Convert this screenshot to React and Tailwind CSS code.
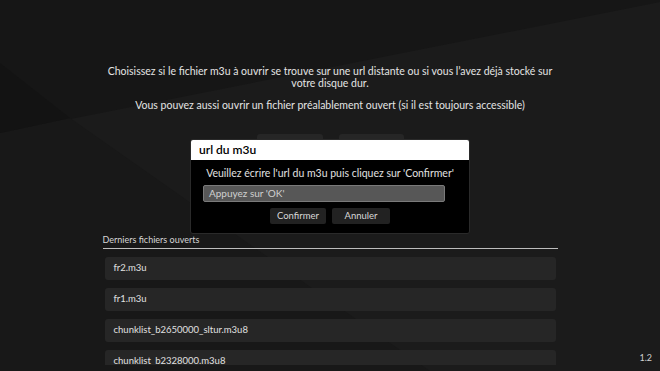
const files = [
    'fr2.m3u',
    'fr1.m3u',
    'chunklist_b2650000_sltur.m3u8',
    'chunklist_b2328000.m3u8',
];

const Backdrop = () => (
    <svg className="absolute inset-0 h-full w-full" viewBox="0 0 660 371" preserveAspectRatio="none">
        <rect width="660" height="371" fill="#1b1b1b" />
        <polygon points="0,0 660,0 660,2 0,133" fill="#161616" />
        <polygon points="70,118 430,371 0,371 0,133" fill="#181818" />
        <polygon points="0,63 70,118 0,133" fill="#131313" />
    </svg>
);

const UrlDialog = () => (
    <div className="absolute left-[190px] top-[139px] w-[280px] overflow-hidden rounded-[3px] border border-[#2a2a2a]">
        <div className="flex h-[20px] items-center bg-white pl-[8px] text-[12px] font-semibold text-black">
            url du m3u
        </div>
        <div className="flex flex-col bg-black px-[12px] pb-[9px] pt-[7px]">
            <p className="text-center text-[10.5px] leading-[12px] text-[#e0e0e0]">
                Veuillez écrire l'url du m3u puis cliquez sur 'Confirmer'
            </p>
            <div className="mt-[6px] flex h-[17px] w-[242px] items-center rounded-[2px] border border-[#7a7a7a] bg-[#575757] pl-[5px] text-[10px] text-[#d0d0d0]">
                Appuyez sur 'OK'
            </div>
            <div className="mt-[6px] flex justify-center gap-[6px]">
                <button className="h-[16px] w-[56px] rounded-[2px] bg-[#222] text-[9.5px] text-[#d8d8d8]">Confirmer</button>
                <button className="h-[16px] w-[58px] rounded-[2px] bg-[#222] text-[9.5px] text-[#d8d8d8]">Annuler</button>
            </div>
        </div>
    </div>
);

export default function App() {
    return (
        <div className="relative h-[371px] w-[660px] overflow-hidden font-['Lato',sans-serif] text-[#e4e4e4]">
            <Backdrop />

            <div className="relative mx-auto flex w-[455px] flex-col items-center pt-[65px]">
                <p className="w-[460px] text-center text-[10.5px] leading-[12px]">
                    Choisissez si le fichier m3u à ouvrir se trouve sur une url distante ou si vous l’avez déjà stocké sur votre disque dur.
                </p>
                <p className="mt-[10px] text-center text-[10.5px] leading-[12px]">
                    Vous pouvez aussi ouvrir un fichier préalablement ouvert (si il est toujours accessible)
                </p>

                <div className="mt-[23px] flex gap-[16px]">
                    <div className="h-[24px] w-[66px] rounded-[3px] bg-[#262626]" />
                    <div className="h-[24px] w-[65px] rounded-[3px] bg-[#262626]" />
                </div>

                <div className="mt-[76px] w-full">
                    <div className="border-b border-[#bdbdbd] pb-[2px] text-[9px] leading-[12px] text-[#d6d6d6]">
                        Derniers fichiers ouverts
                    </div>
                    <div className="mt-[8px] flex h-[108px] flex-col gap-[8px] overflow-hidden px-[2px]">
                        {files.map((name) => (
                            <div
                                key={name}
                                className="flex h-[23px] shrink-0 items-center rounded-[3px] bg-[#262626] pl-[9px] text-[9.5px] text-[#e0e0e0]"
                            >
                                {name}
                            </div>
                        ))}
                    </div>
                </div>
            </div>

            <UrlDialog />

            <span className="absolute bottom-[7px] right-[8px] text-[9px] text-[#d0d0d0]">1.2</span>
        </div>
    );
}
